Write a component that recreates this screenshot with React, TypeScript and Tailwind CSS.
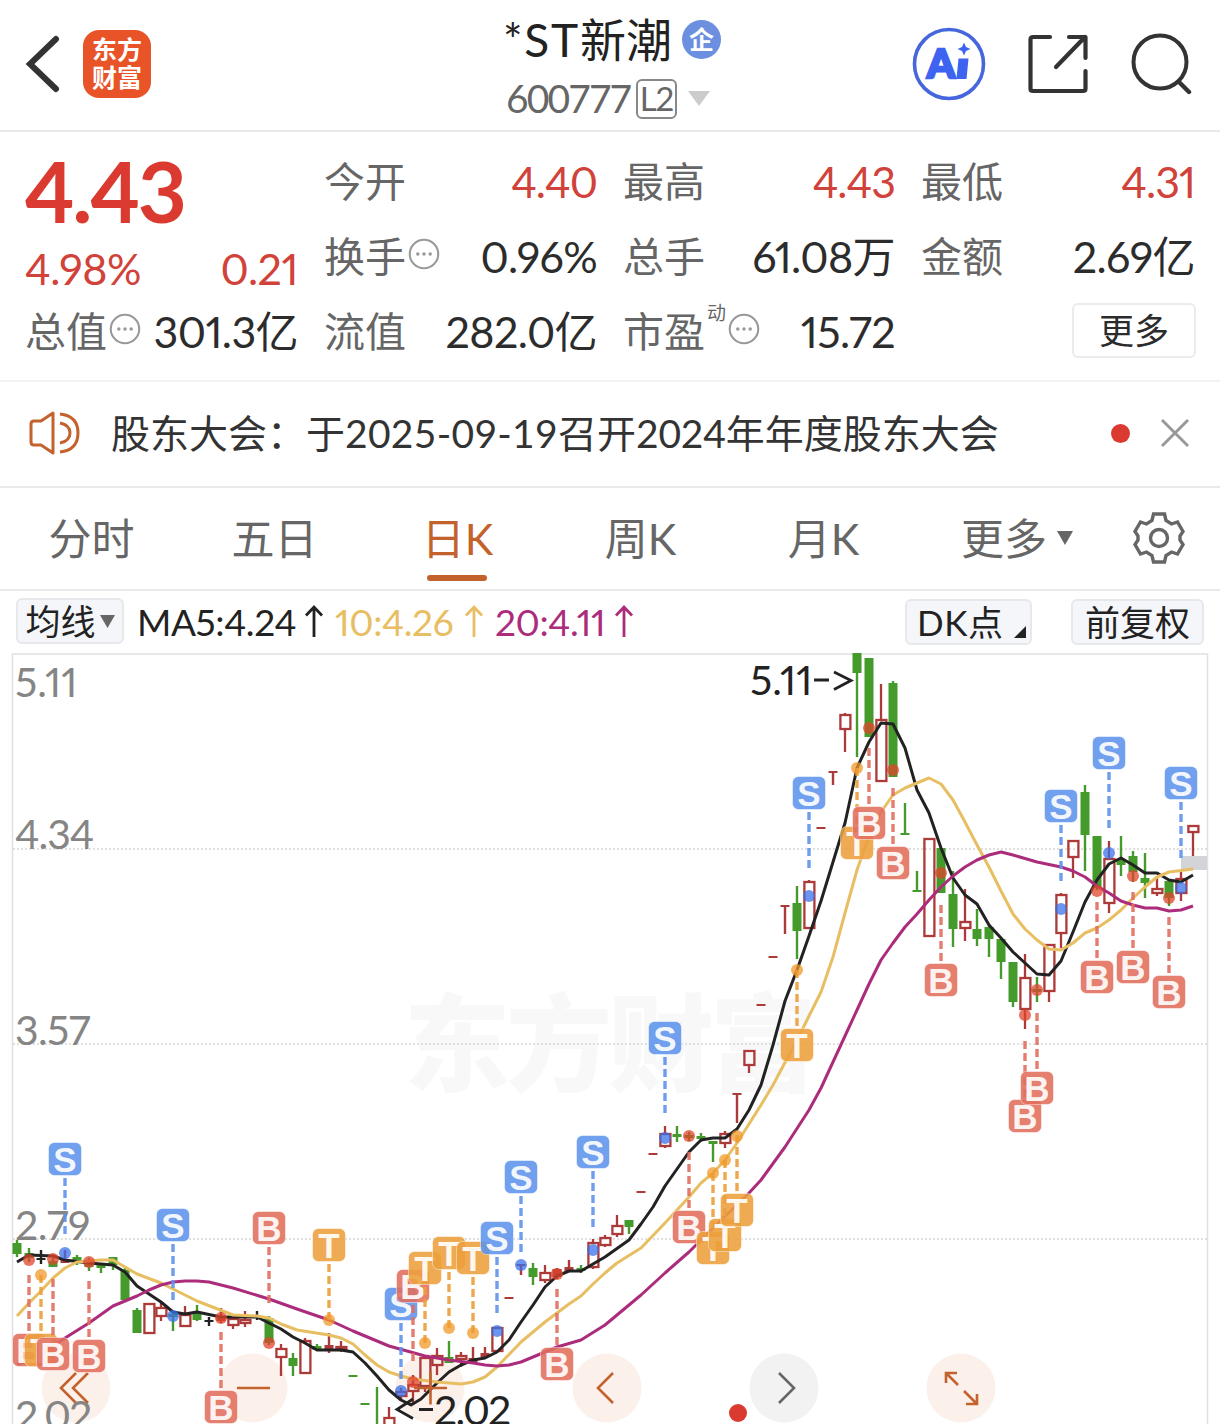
import type { ReactNode } from 'react'

type Candle = {
  x: number
  top: number
  bottom: number
  high: number
  low: number
  kind: 'up' | 'down' | 'solid' | 'flat'
}

// x, body top, body bottom, high, low, kind
const rawCandles: [number, number, number, number, number, Candle['kind']][] = [
  [17, 1243, 1254, 1240, 1257, 'down'],
  [29, 1253, 1258, 1248, 1262, 'down'],
  [41, 1258, 1260, 1250, 1264, 'flat'],
  [53, 1261, 1267, 1258, 1267, 'down'],
  [65, 1259, 1263, 1250, 1263, 'solid'],
  [77, 1257, 1261, 1255, 1265, 'down'],
  [89, 1264, 1267, 1258, 1271, 'down'],
  [101, 1264, 1268, 1264, 1273, 'down'],
  [113, 1257, 1265, 1257, 1270, 'down'],
  [125, 1270, 1300, 1268, 1300, 'down'],
  [137, 1310, 1333, 1308, 1333, 'down'],
  [149, 1303, 1334, 1303, 1334, 'up'],
  [161, 1307, 1317, 1303, 1321, 'up'],
  [173, 1314, 1317, 1312, 1331, 'down'],
  [185, 1314, 1327, 1306, 1327, 'up'],
  [197, 1313, 1320, 1305, 1321, 'down'],
  [209, 1320, 1322, 1317, 1326, 'flat'],
  [221, 1316, 1321, 1308, 1323, 'solid'],
  [233, 1318, 1326, 1318, 1329, 'up'],
  [245, 1319, 1324, 1311, 1327, 'up'],
  [257, 1316, 1318, 1311, 1320, 'flat'],
  [269, 1318, 1343, 1316, 1345, 'down'],
  [281, 1348, 1358, 1344, 1376, 'up'],
  [293, 1358, 1366, 1353, 1376, 'down'],
  [305, 1340, 1374, 1338, 1374, 'up'],
  [317, 1346, 1350, 1344, 1350, 'down'],
  [329, 1345, 1350, 1333, 1353, 'solid'],
  [341, 1346, 1350, 1341, 1352, 'up'],
  [353, 1375, 1377, 1376, 1376, 'down'],
  [365, 1403, 1405, 1404, 1404, 'down'],
  [377, 1424, 1426, 1387, 1424, 'down'],
  [389, 1417, 1430, 1407, 1430, 'up'],
  [401, 1391, 1397, 1388, 1399, 'up'],
  [413, 1384, 1392, 1375, 1405, 'up'],
  [425, 1357, 1387, 1357, 1392, 'up'],
  [437, 1355, 1366, 1348, 1375, 'up'],
  [449, 1357, 1363, 1341, 1363, 'down'],
  [461, 1355, 1360, 1352, 1367, 'up'],
  [473, 1358, 1363, 1347, 1364, 'solid'],
  [485, 1353, 1357, 1347, 1357, 'solid'],
  [497, 1327, 1352, 1327, 1352, 'up'],
  [509, 1297, 1299, 1298, 1298, 'solid'],
  [521, 1264, 1266, 1264, 1275, 'solid'],
  [533, 1268, 1277, 1263, 1285, 'down'],
  [545, 1272, 1281, 1265, 1283, 'up'],
  [557, 1269, 1277, 1268, 1279, 'solid'],
  [569, 1267, 1272, 1260, 1272, 'solid'],
  [581, 1268, 1271, 1265, 1273, 'down'],
  [593, 1242, 1268, 1239, 1269, 'up'],
  [605, 1237, 1246, 1235, 1247, 'up'],
  [617, 1225, 1235, 1215, 1237, 'up'],
  [629, 1220, 1227, 1220, 1234, 'down'],
  [641, 1191, 1193, 1192, 1192, 'solid'],
  [653, 1153, 1155, 1154, 1154, 'solid'],
  [665, 1133, 1147, 1126, 1148, 'up'],
  [677, 1134, 1137, 1126, 1142, 'down'],
  [689, 1135, 1138, 1132, 1141, 'down'],
  [701, 1136, 1139, 1133, 1142, 'down'],
  [713, 1141, 1144, 1141, 1162, 'down'],
  [725, 1133, 1144, 1131, 1148, 'up'],
  [737, 1093, 1095, 1093, 1123, 'solid'],
  [749, 1050, 1066, 1050, 1073, 'up'],
  [761, 1004, 1006, 1005, 1005, 'solid'],
  [773, 956, 958, 957, 957, 'solid'],
  [785, 905, 907, 905, 934, 'solid'],
  [797, 903, 931, 886, 959, 'down'],
  [809, 881, 929, 880, 929, 'up'],
  [821, 827, 829, 828, 828, 'solid'],
  [833, 771, 773, 771, 785, 'solid'],
  [845, 714, 730, 713, 752, 'up'],
  [857, 653, 673, 653, 757, 'down'],
  [869, 658, 737, 658, 737, 'down'],
  [881, 719, 782, 684, 782, 'up'],
  [893, 683, 777, 681, 777, 'down'],
  [905, 833, 835, 803, 834, 'down'],
  [917, 890, 892, 871, 892, 'down'],
  [929, 838, 937, 838, 937, 'up'],
  [941, 848, 893, 848, 893, 'down'],
  [953, 894, 929, 871, 947, 'down'],
  [965, 921, 929, 889, 941, 'up'],
  [977, 929, 939, 909, 946, 'down'],
  [989, 927, 939, 924, 957, 'down'],
  [1001, 939, 962, 939, 979, 'down'],
  [1013, 962, 1002, 962, 1007, 'down'],
  [1025, 977, 1010, 954, 1029, 'up'],
  [1037, 989, 992, 977, 1002, 'down'],
  [1049, 944, 992, 944, 1002, 'up'],
  [1061, 894, 934, 893, 948, 'up'],
  [1073, 840, 858, 840, 878, 'up'],
  [1085, 792, 835, 785, 871, 'down'],
  [1097, 836, 888, 836, 890, 'down'],
  [1109, 858, 904, 841, 913, 'up'],
  [1121, 860, 865, 836, 876, 'down'],
  [1133, 856, 872, 851, 882, 'down'],
  [1145, 878, 883, 853, 898, 'down'],
  [1157, 888, 894, 877, 896, 'up'],
  [1169, 881, 898, 881, 906, 'down'],
  [1181, 878, 894, 872, 901, 'up'],
  [1193, 825, 833, 825, 856, 'up'],
]

const candles: Candle[] = rawCandles.map(([x, top, bottom, high, low, kind]) => ({
  x,
  top,
  bottom,
  high,
  low,
  kind,
}))

const ma5 =
  '17,1262 29,1255 53,1256 65,1260 89,1263 113,1265 125,1272 137,1286 149,1294 161,1302 173,1312 185,1314 197,1312 221,1317 245,1317 257,1317 269,1323 281,1329 293,1337 305,1343 317,1350 341,1350 353,1352 365,1363 377,1376 389,1390 401,1400 411,1405 421,1399 437,1383 449,1372 461,1365 473,1360 485,1358 497,1352 509,1340 521,1322 533,1305 545,1287 557,1276 569,1271 581,1271 605,1257 629,1240 641,1224 653,1207 665,1186 689,1152 701,1140 713,1138 725,1138 737,1129 749,1110 761,1085 773,1045 785,1001 797,970 809,936 821,901 833,862 845,823 857,768 869,742 881,723 893,724 905,748 917,790 929,813 941,848 953,878 965,895 977,904 989,925 1001,938 1013,952 1025,963 1037,974 1049,975 1061,961 1073,932 1085,902 1097,880 1109,864 1121,858 1133,865 1145,873 1157,873 1169,880 1181,882 1193,875'

const ma10 =
  '17,1316 29,1303 41,1291 53,1278 65,1268 77,1262 101,1260 113,1260 125,1267 137,1274 161,1283 197,1301 233,1315 257,1316 269,1318 281,1324 297,1330 329,1335 341,1338 353,1344 365,1355 377,1365 389,1372 401,1376 413,1379 437,1382 461,1384 473,1382 485,1377 497,1367 521,1342 545,1322 569,1304 581,1296 593,1284 605,1273 617,1263 641,1248 665,1223 689,1197 701,1183 713,1173 725,1160 737,1143 761,1105 773,1085 797,1040 809,1016 821,992 833,957 845,913 857,870 869,836 881,812 893,795 905,788 917,783 929,778 941,784 953,800 965,822 977,845 989,867 1001,891 1013,914 1025,929 1037,940 1049,949 1061,950 1073,943 1085,933 1097,928 1109,920 1121,910 1133,898 1145,887 1157,877 1169,872 1193,869'

const ma20 =
  '17,1364 29,1361 41,1354 53,1346 65,1338 89,1323 113,1306 137,1296 149,1290 161,1285 173,1282 185,1281 197,1281 209,1282 233,1288 269,1299 297,1309 329,1320 353,1331 389,1346 425,1356 449,1360 473,1363 485,1365 497,1366 509,1365 521,1362 533,1357 557,1347 581,1340 605,1325 641,1295 665,1273 689,1252 713,1228 749,1193 761,1180 785,1147 809,1110 821,1088 833,1062 845,1036 857,1010 869,984 881,960 893,943 905,927 917,914 929,900 941,887 953,876 965,867 977,860 989,855 1001,852 1013,855 1037,862 1061,867 1073,871 1085,877 1097,886 1109,893 1121,901 1133,905 1145,908 1157,908 1169,911 1181,910 1193,906'

type Side = 'S' | 'B' | 'T'

// side, x, badge centre y, marker dot y
const signals: [Side, number, number, number][] = [
  ['B', 29, 1350, 1260],
  ['T', 41, 1350, 1275],
  ['B', 53, 1354, 1259],
  ['S', 65, 1159, 1253],
  ['B', 89, 1356, 1262],
  ['S', 173, 1225, 1316],
  ['B', 221, 1407, 1318],
  ['B', 269, 1228, 1343],
  ['T', 329, 1245, 1320],
  ['S', 401, 1304, 1391],
  ['B', 413, 1286, 1382],
  ['T', 425, 1268, 1343],
  ['T', 449, 1253, 1328],
  ['T', 473, 1258, 1333],
  ['S', 497, 1238, 1331],
  ['S', 521, 1177, 1265],
  ['B', 557, 1364, 1274],
  ['S', 593, 1152, 1250],
  ['S', 665, 1038, 1138],
  ['B', 689, 1227, 1136],
  ['T', 713, 1248, 1173],
  ['T', 725, 1235, 1160],
  ['T', 737, 1210, 1136],
  ['T', 797, 1045, 970],
  ['S', 809, 793, 896],
  ['T', 857, 843, 768],
  ['B', 869, 823, 728],
  ['B', 893, 863, 770],
  ['B', 941, 980, 873],
  ['B', 1025, 1116, 1015],
  ['B', 1037, 1088, 990],
  ['S', 1061, 806, 909],
  ['B', 1097, 977, 891],
  ['S', 1109, 753, 853],
  ['B', 1133, 967, 876],
  ['B', 1169, 992, 898],
  ['S', 1181, 783, 888],
]

const badgeColor: Record<Side, string> = { S: '#5e93ec', B: '#e26f5e', T: '#eda03c' }
const dotColor: Record<Side, string> = { S: '#3a72e8', B: '#e0442c', T: '#f09a2a' }

const RED = '#ab3a38'
const GREEN = '#459a2c'

function CandleShape({ x, top, bottom, high, low, kind }: Candle) {
  const color = kind === 'down' ? GREEN : kind === 'flat' ? '#222' : RED
  if (kind === 'up') {
    return (
      <g stroke={color} strokeWidth={2.3} fill="none">
        <path d={`M${x} ${high}V${top}M${x} ${bottom}V${low}`} />
        <rect x={x - 4.6} y={top + 1} width={10} height={Math.max(bottom - top - 2, 2)} />
      </g>
    )
  }
  return (
    <g fill={color}>
      <rect x={x - 1.2} y={high} width={2.4} height={low - high} />
      <rect x={x - 4.5} y={top} width={9} height={bottom - top} />
    </g>
  )
}

function Signal({ side, x, y, dot }: { side: Side; x: number; y: number; dot: number }) {
  const dir = dot > y ? 1 : -1
  return (
    <g>
      <path
        d={`M${x} ${y + dir * 19}V${y + dir * 75}`}
        stroke={badgeColor[side]}
        strokeWidth={3.4}
        strokeDasharray="8 4"
        opacity={0.9}
      />
      <circle cx={x} cy={dot} r={6} fill={dotColor[side]} opacity={0.75} />
      <rect
        x={x - 16.5}
        y={y - 16.5}
        width={33}
        height={33}
        rx={6}
        fill={badgeColor[side]}
        stroke="#fff"
        strokeOpacity={0.5}
        strokeWidth={1}
        opacity={0.88}
      />
      <text
        x={x}
        y={y + 12.5}
        textAnchor="middle"
        fontSize={35}
        fontWeight={700}
        fill="#fff"
        fillOpacity={0.92}
        className="font-['Liberation_Sans',sans-serif]"
      >
        {side}
      </text>
    </g>
  )
}

function Chart() {
  return (
    <svg
      width="1220"
      height="771"
      viewBox="0 653 1220 771"
      className="block font-[Lato,'Noto_Sans_CJK_SC',sans-serif] proportional-nums"
    >
      <text
        x="404"
        y="1083"
        fontSize="106"
        fontWeight="900"
        textLength="412"
        fill="#f8f8f8"
        className="font-['Noto_Sans_CJK_SC',sans-serif]"
      >
        东方财富
      </text>
      <path d="M12.5 1424V654H1207.5V1424" fill="none" stroke="#e0e1e3" strokeWidth="1.6" />
      <path
        d="M13 849H1207M13 1044H1207M13 1239H1207"
        stroke="#d6d6d6"
        strokeWidth="1.4"
        strokeDasharray="2 2"
      />
      <g fill="#858585" fontSize="41">
        <text x="15" y="697">5.11</text>
        <text x="15" y="849" letterSpacing="-1">4.34</text>
        <text x="15" y="1045" letterSpacing="-0.6">3.57</text>
        <text x="15" y="1240" letterSpacing="-0.4">2.79</text>
      </g>

      {[76, 253, 430, 607, 961].map((cx) => (
        <circle key={cx} cx={cx} cy="1388" r="34.5" fill="#fcf0ea" />
      ))}
      <circle cx="784" cy="1388" r="34.5" fill="#f2f2f2" />
      <g fill="none" stroke="#c4622d" strokeWidth="2.6">
        <path d="M76 1373L61 1388L76 1403M88 1373L73 1388L88 1403" />
        <path d="M237 1388H270" />
        <path d="M613 1373L598 1388L613 1403" />
        <path d="M958 1385L946 1373M946 1383V1373H957M964 1391L977 1404M966 1404H977V1394" />
      </g>
      <path d="M779 1373L794 1388L779 1403" fill="none" stroke="#666" strokeWidth="2.6" />

      <rect x="1181" y="856" width="26" height="14" fill="#d3d4d8" />
      {candles.map((c) => (
        <CandleShape key={c.x} {...c} />
      ))}
      <g fill="none" strokeWidth="3" strokeLinejoin="round">
        <polyline points={ma5} stroke="#222" />
        <polyline points={ma10} stroke="#e8be62" />
        <polyline points={ma20} stroke="#ac2c7c" />
      </g>
      <path d="M414 1388H447M430.500 1371.500V1404.500" stroke="#c4622d" strokeWidth="2.6" />

      {signals.map(([side, x, y, dot]) => (
        <Signal key={`${side}${x}`} side={side} x={x} y={y} dot={dot} />
      ))}

      <circle cx="738" cy="1413" r="9" fill="#db3a30" />
      <text x="15" y="1430" fontSize="41" letterSpacing="-1.8" fill="#858585">2.02</text>
      <g fill="none" stroke="#222" strokeWidth="2.8">
        <path d="M413 1399L397 1409.500L413 1418.500M419 1409.500H433" />
        <path d="M834 672L851 680.500L834 689.500M814 680H829" />
      </g>
      <g fill="#222" fontSize="41">
        <text x="434" y="1425" letterSpacing="-1.8">2.02</text>
        <text x="750" y="695">5.11</text>
      </g>
    </svg>
  )
}

function InfoDots() {
  return (
    <svg width="32" height="32" viewBox="0 0 31 31" fill="none" className="-mt-1.5 ml-[2px]">
      <circle cx="15.500" cy="15.500" r="13.800" stroke="#999" strokeWidth="2" />
      <circle cx="9.500" cy="15.500" r="1.700" fill="#999" />
      <circle cx="15.500" cy="15.500" r="1.700" fill="#999" />
      <circle cx="21.500" cy="15.500" r="1.700" fill="#999" />
    </svg>
  )
}

function Stat({ label, value, info, sup, red }: {
  label: string
  value: string
  info?: boolean
  sup?: string
  red?: boolean
}) {
  return (
    <div className="flex h-[75px] items-center justify-between whitespace-nowrap">
      <span className="flex items-center text-[41px] text-[#666]">
        {label}
        {sup && <sup className="-mt-5 ml-[2px] text-[19px] leading-none">{sup}</sup>}
        {info && <InfoDots />}
      </span>
      <span className={red ? 'text-[43px] tracking-[-1px] text-[#d0423a]' : 'text-[43px] tracking-[-0.6px] text-[#2c2c2c]'}>
        {value}
      </span>
    </div>
  )
}

function Header() {
  return (
    <header className="flex h-[132px] items-center border-b-2 border-[#e8e9ea] px-[25px]">
      <div className="flex w-[300px] items-center">
        <svg width="36" height="58" viewBox="0 0 36 58" fill="none" className="-mt-0.5">
          <path d="M31 4L5 29L31 54" stroke="#333" strokeWidth="6" strokeLinecap="round" />
        </svg>
        <div className="-mt-0.5 ml-[22px] flex h-[68px] w-[68px] flex-col items-center justify-center rounded-2xl bg-[#e85427] pb-[2px] text-[25px] font-bold leading-[28px] text-white">
          <span>东方</span>
          <span>财富</span>
        </div>
      </div>
      <div className="flex flex-1 flex-col pl-[178px] pt-[7px]">
        <div className="flex h-[60px] items-center text-[46px] text-[#222]">
          <span className="whitespace-nowrap tracking-[1.8px]">*ST</span>
          <span className="mr-[10px] whitespace-nowrap">新潮</span>
          <span className="flex h-[39px] w-[39px] items-center justify-center rounded-full bg-[#6c8fdf] text-[25px] font-bold text-white">
            企
          </span>
        </div>
        <div className="flex h-[58px] items-center pl-[3px] text-[39px] text-[#666]">
          <span className="w-[130px] tabular-nums tracking-[-1.9px]">600777</span>
          <span className="flex h-[40px] w-[41px] items-center justify-center rounded-md border-2 border-[#888] text-[33px] tracking-[-1px]">
            L2
          </span>
          <svg width="22" height="15" viewBox="0 0 22 15" className="ml-[11px]">
            <path d="M0 0H22L11 15Z" fill="#ccc" />
          </svg>
        </div>
      </div>
      <div className="-mt-0.5 flex w-[284px] items-center justify-end pr-[2px]">
        <svg width="74" height="74" viewBox="0 0 74 74" fill="none">
          <circle cx="37" cy="37" r="34.500" stroke="#4566dc" strokeWidth="3.600" />
          <text
            x="15"
            y="50.500"
            fontSize="39"
            fontWeight="900"
            textLength="28"
            lengthAdjust="spacingAndGlyphs"
            fill="#3d63f0"
            stroke="#3d63f0"
            strokeWidth="2.500"
            className="font-[Lato,sans-serif]"
          >
            A
          </text>
          <path d="M46.500 31.500H56.500L54.500 52H44.500Z" fill="#3d63f0" />
          <path d="M52 15.500L54 20L58.500 22L54 24L52 28.500L50 24L45.500 22L50 20Z" fill="#3d63f0" />
        </svg>
        <svg width="60" height="60" viewBox="0 0 60 60" fill="none" className="ml-[42px]">
          <path
            d="M22 3H5Q2.500 3 2.500 5.500V54.500Q2.500 57 5 57H55Q57.500 57 57.500 54.500V37M41 3H57.500V24M57 3L28 33"
            stroke="#333"
            strokeWidth="4.200"
            strokeLinecap="round"
            strokeLinejoin="round"
          />
        </svg>
        <svg width="62" height="62" viewBox="0 0 62 62" fill="none" className="ml-[43px]">
          <circle cx="29" cy="29" r="26.500" stroke="#333" strokeWidth="4" />
          <path d="M48 49L58 59" stroke="#333" strokeWidth="4.400" strokeLinecap="round" />
        </svg>
      </div>
    </header>
  )
}

function Quote() {
  return (
    <section className="flex h-[250px] border-b-2 border-[#f2f2f3] px-[25px] pt-[12px]">
      <div className="w-[273px]">
        <div className="flex h-[96px] items-center pb-[3px] text-[85px] font-bold tabular-nums tracking-[-2px] text-[#db3a30]">
          4.43
        </div>
        <div className="flex h-[54px] items-center justify-between pt-[2px] text-[43px] tracking-[-0.5px] text-[#d0423a]">
          <span>4.98%</span>
          <span>0.21</span>
        </div>
        <Stat label="总值" value="301.3亿" info />
      </div>
      <div className="ml-[26px] w-[273px]">
        <Stat label="今开" value="4.40" red />
        <Stat label="换手" value="0.96%" info />
        <Stat label="流值" value="282.0亿" />
      </div>
      <div className="ml-[26px] w-[272px]">
        <Stat label="最高" value="4.43" red />
        <Stat label="总手" value="61.08万" />
        <Stat label="市盈" value="15.72" sup="动" info />
      </div>
      <div className="-mr-[2px] ml-[26px] w-[274px]">
        <Stat label="最低" value="4.31" red />
        <Stat label="金额" value="2.69亿" />
        <div className="-mr-[1px] flex h-[72px] items-center justify-end">
          <button className="h-[55px] w-[124px] rounded-md border-2 border-[#ebebec] text-[35px] leading-none text-[#2c2c2c]">
            更多
          </button>
        </div>
      </div>
    </section>
  )
}

function Notice() {
  return (
    <section className="flex h-[106px] items-center border-b-2 border-[#e8e9ea] pb-[2px] pl-[28px] pr-[29px]">
      <svg width="54" height="46" viewBox="0 0 54 46" fill="none" stroke="#c4622d" strokeWidth="3">
        <path d="M25 3V43L13 35H6Q3 35 3 32V14Q3 11 6 11H13Z" strokeLinejoin="round" />
        <path d="M32 13Q42 15 42 23Q42 31 32 33M32 4Q50 6 50 23Q50 40 32 42" />
      </svg>
      <p className="ml-[29px] flex-1 whitespace-nowrap text-[39px] text-[#333]">
        股东大会：于<span className="tabular-nums tracking-[0.3px]">2025-09-19</span>召开
        <span className="tabular-nums tracking-[-0.2px]">2024</span>年年度股东大会
      </p>
      <span className="h-[19px] w-[19px] rounded-full bg-[#db3a30]" />
      <svg width="32" height="32" viewBox="0 0 32 32" className="ml-[29px]">
        <path d="M3 3L29 29M29 3L3 29" stroke="#999" strokeWidth="3" />
      </svg>
    </section>
  )
}

function Tab({ active, children }: { active?: boolean; children: ReactNode }) {
  return (
    <button
      className={
        active
          ? 'relative flex w-[183px] items-center justify-center text-[#c4622d]'
          : 'relative flex w-[183px] items-center justify-center text-[#666]'
      }
    >
      {children}
      {active && <span className="absolute bottom-[8px] left-[61px] h-[6px] w-[60px] rounded-full bg-[#c4622d]" />}
    </button>
  )
}

function Tabs() {
  return (
    <nav className="flex h-[103px] border-b-2 border-[#e8e9ea] text-[43px]">
      <Tab>分时</Tab>
      <Tab>五日</Tab>
      <Tab active>日K</Tab>
      <Tab>周K</Tab>
      <Tab>月K</Tab>
      <button className="ml-[46px] flex w-[172px] items-center text-[#666]">
        更多
        <svg width="16" height="14" viewBox="0 0 16 14" className="-mt-0.5 ml-[10px]">
          <path d="M0 0H16L8 14Z" fill="#666" />
        </svg>
      </button>
      <svg width="52" height="52" viewBox="0 0 52 52" fill="none" stroke="#666" strokeWidth="3.400" className="mt-[24px]">
        <path d="M20.500 2H31.500L33 8.500L38.500 12L44.500 10L50 19.500L47 24V28L50 32.500L44.500 42L38.500 40L33 43.500L31.500 50H20.500L19 43.500L13.500 40L7.500 42L2 32.500L5 28V24L2 19.500L7.500 10L13.500 12L19 8.500Z" />
        <circle cx="26" cy="26" r="8.500" />
      </svg>
    </nav>
  )
}

function UpArrow() {
  return (
    <svg width="20" height="34" viewBox="0 0 20 34" fill="none" stroke="currentColor" strokeWidth="2.800">
      <path d="M10 33V3M2 11.500L10 3L18 11.500" />
    </svg>
  )
}

function Average({ children }: { children: ReactNode }) {
  return (
    <span className="flex items-center justify-between">
      {children}
      <UpArrow />
    </span>
  )
}

function Toolbar() {
  return (
    <div className="flex h-[62px] items-center pb-[2px] pl-[16px] pr-[16px] text-[35px] text-[#222]">
      <button className="flex h-[46px] w-[108px] items-center justify-center rounded-md border-2 border-[#e6e8ec] bg-[#f5f6f9]">
        均线
        <svg width="15" height="13" viewBox="0 0 15 13" className="ml-1">
          <path d="M0 0H15L7.500 13Z" fill="#666" />
        </svg>
      </button>
      <div className="ml-[13px] grid flex-1 grid-cols-[187px_149px_139px] gap-[11px] whitespace-nowrap text-[37px] tracking-[-0.4px]">
        <Average>MA5:4.24</Average>
        <div className="text-[#e8be62]">
          <Average>10:4.26</Average>
        </div>
        <div className="text-[#ac2c7c]">
          <Average>20:4.11</Average>
        </div>
      </div>
      <button className="relative mt-[2px] flex h-[46px] w-[127px] items-center rounded-md border-2 border-[#e6e8ec] bg-[#f5f6f9] pl-[10px] tracking-[0.6px]">
        DK点
        <svg width="12" height="12" viewBox="0 0 12 12" className="absolute bottom-[5px] right-[4px]">
          <path d="M12 0V12H0Z" fill="#222" />
        </svg>
      </button>
      <button className="ml-[39px] mt-[2px] h-[46px] w-[133px] rounded-md border-2 border-[#e6e8ec] bg-[#f5f6f9] leading-none">
        前复权
      </button>
    </div>
  )
}

export default function App() {
  return (
    <div className="h-[1424px] w-[1220px] overflow-hidden bg-white font-[Lato,'Noto_Sans_CJK_SC',sans-serif] leading-none proportional-nums">
      <Header />
      <Quote />
      <Notice />
      <Tabs />
      <Toolbar />
      <Chart />
    </div>
  )
}
